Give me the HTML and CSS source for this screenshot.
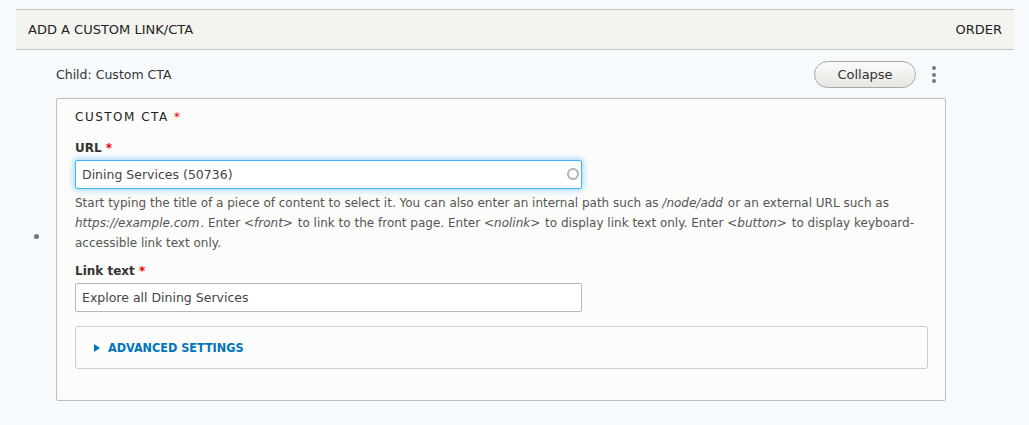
FILE: index.html
```html
<!DOCTYPE html>
<html>
<head>
    <meta charset="utf-8">
    <title>Add a custom link/CTA</title>
    <link rel="stylesheet" href="styles.css">
</head>
<body>
    <div class="field-table">
        <div class="table-head">
            <span class="head-title">Add a custom link/CTA</span>
            <span class="head-order">Order</span>
        </div>
        <div class="table-row">
            <div class="handle-col">
                <span class="handle-dot"></span>
            </div>
            <div class="row-body">
                <div class="row-top">
                    <span class="child-label">Child: Custom CTA</span>
                    <div class="row-actions">
                        <button class="btn-collapse" type="button">Collapse</button>
                        <span class="kebab"><i></i><i></i><i></i></span>
                    </div>
                </div>
                <div class="cta-box">
                    <div class="cta-legend">Custom CTA <span class="req">*</span></div>

                    <div class="form-item">
                        <label class="form-label">URL <span class="req">*</span></label>
                        <div class="input-wrap">
                            <input class="form-text is-focus" type="text" value="Dining Services (50736)">
                            <span class="throbber"></span>
                        </div>
                        <div class="description">
                            Start typing the title of a piece of content to select it. You can also enter an internal path such as <em>/node/add</em> or an external URL such as <em>https://example.com</em>. Enter <em>&lt;front&gt;</em> to link to the front page. Enter <em>&lt;nolink&gt;</em> to display link text only. Enter <em>&lt;button&gt;</em> to display keyboard-accessible link text only.
                        </div>
                    </div>

                    <div class="form-item">
                        <label class="form-label">Link text <span class="req">*</span></label>
                        <input class="form-text" type="text" value="Explore all Dining Services">
                    </div>

                    <div class="details">
                        <span class="details-toggle"><span class="arrow"></span>Advanced settings</span>
                    </div>
                </div>
            </div>
        </div>
    </div>
</body>
</html>
```

FILE: styles.css
```css
body {
    margin: 0;
    padding: 9px 15px 0 16px;
    background: #f6fafd;
    color: #333;
    font-family: "DejaVu Sans", Verdana, sans-serif;
    font-size: 13px;
}
.field-table {
    width: 998px;
}
.table-head {
    display: flex;
    justify-content: space-between;
    align-items: center;
    height: 39px;
    padding: 0 12px;
    background: #f3f3ef;
    border-top: 1px solid #c4c4c0;
    border-bottom: 1px solid #c4c4c0;
    font-size: 13px;
    text-transform: uppercase;
    color: #222;
}
.table-row {
    display: flex;
    padding: 11px 0 24px;
}
.handle-col {
    width: 40px;
    display: flex;
    align-items: center;
    justify-content: center;
    padding-top: 10px;
}
.handle-dot {
    width: 5px;
    height: 5px;
    border-radius: 50%;
    background: #777;
}
.row-body {
    width: 890px;
}
.row-top {
    display: flex;
    justify-content: space-between;
    align-items: center;
    height: 27px;
    margin-bottom: 10px;
}
.child-label {
    font-size: 12.5px;
    color: #333;
}
.row-actions {
    display: flex;
    align-items: center;
    gap: 16px;
    padding-right: 10px;
}
.btn-collapse {
    height: 27px;
    width: 102px;
    padding: 0;
    border: 1px solid #a8a8a4;
    border-radius: 14px;
    background: linear-gradient(#fbfbf9, #e6e6e2);
    font-family: inherit;
    font-size: 13px;
    color: #333;
}
.kebab {
    display: flex;
    flex-direction: column;
    gap: 2.5px;
}
.kebab i {
    display: block;
    width: 4px;
    height: 4px;
    border-radius: 50%;
    background: #777;
}
.cta-box {
    border: 1px solid #bdbdb9;
    border-radius: 2px;
    background: #fcfcfa;
    padding: 11px 18px 31px;
}
.cta-legend {
    font-size: 12px;
    line-height: 14px;
    text-transform: uppercase;
    letter-spacing: 1.5px;
    color: #222;
    margin-bottom: 17px;
}
.req {
    color: #e00;
    letter-spacing: 0;
}
.form-item {
    margin-bottom: 11px;
}
.form-label {
    display: block;
    font-size: 12px;
    line-height: 14px;
    font-weight: bold;
    color: #333;
    margin-bottom: 5px;
}
.input-wrap {
    position: relative;
    width: 507px;
}
.form-text {
    box-sizing: border-box;
    display: block;
    width: 507px;
    height: 29px;
    padding: 0 6px;
    border: 1px solid #b8b8b8;
    border-radius: 2px;
    background: #fff;
    font-family: inherit;
    font-size: 12.5px;
    color: #444;
    outline: none;
}
.form-text.is-focus {
    border-color: #40b6ff;
    box-shadow: 0 0 6px 1px rgba(64, 182, 255, 0.55);
}
.throbber {
    position: absolute;
    right: 3px;
    top: 8px;
    width: 8px;
    height: 8px;
    border: 2px solid #b0b0b0;
    border-radius: 50%;
}
.description {
    margin-top: 4px;
    font-size: 12px;
    line-height: 20px;
    color: #555;
}
.description em {
    font-style: italic;
    margin-right: 1px;
}
.details {
    margin-top: 14px;
    height: 41px;
    display: flex;
    align-items: center;
    padding: 0 18px;
    border: 1px solid #ccc;
    border-radius: 3px;
    background: #fcfcfa;
    width: 815px;
}
.details-toggle {
    display: flex;
    align-items: center;
    font-family: "DejaVu Sans Condensed", "DejaVu Sans", sans-serif;
    font-size: 12.5px;
    font-weight: bold;
    text-transform: uppercase;
    color: #0074bd;
}
.arrow {
    width: 0;
    height: 0;
    border-left: 6px solid #0074bd;
    border-top: 4px solid transparent;
    border-bottom: 4px solid transparent;
    margin-right: 8px;
}
```
